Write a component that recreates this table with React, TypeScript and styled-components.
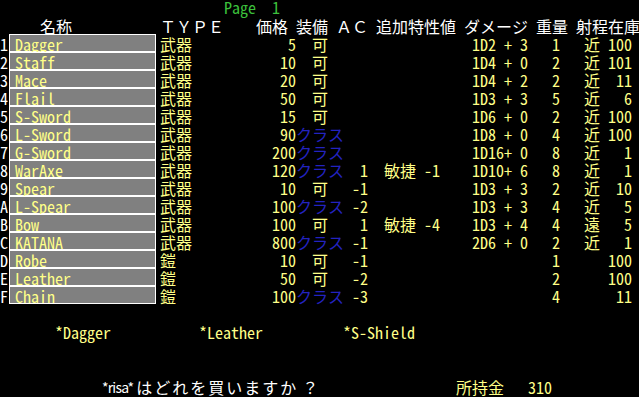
import React from 'react';
import styled, { createGlobalStyle } from 'styled-components';

const YELLOW = '#ffff88';
const BLUE = '#2323c0';

type Item = {
  key: string;
  name: string;
  type: string;
  price: number;
  equip: '可' | 'クラス';
  ac?: string;
  extra?: string;
  damage?: string;
  weight: number;
  range?: string;
  stock: number;
};

const items: Item[] = [
  { key: '1', name: 'Dagger', type: '武器', price: 5, equip: '可', damage: '1D2 + 3', weight: 1, range: '近', stock: 100 },
  { key: '2', name: 'Staff', type: '武器', price: 10, equip: '可', damage: '1D4 + 0', weight: 2, range: '近', stock: 101 },
  { key: '3', name: 'Mace', type: '武器', price: 20, equip: '可', damage: '1D4 + 2', weight: 2, range: '近', stock: 11 },
  { key: '4', name: 'Flail', type: '武器', price: 50, equip: '可', damage: '1D3 + 3', weight: 5, range: '近', stock: 6 },
  { key: '5', name: 'S-Sword', type: '武器', price: 15, equip: '可', damage: '1D6 + 0', weight: 2, range: '近', stock: 100 },
  { key: '6', name: 'L-Sword', type: '武器', price: 90, equip: 'クラス', damage: '1D8 + 0', weight: 4, range: '近', stock: 100 },
  { key: '7', name: 'G-Sword', type: '武器', price: 200, equip: 'クラス', damage: '1D16+ 0', weight: 8, range: '近', stock: 1 },
  { key: '8', name: 'WarAxe', type: '武器', price: 120, equip: 'クラス', ac: '1', extra: '敏捷 -1', damage: '1D10+ 6', weight: 8, range: '近', stock: 1 },
  { key: '9', name: 'Spear', type: '武器', price: 10, equip: '可', ac: '-1', damage: '1D3 + 3', weight: 2, range: '近', stock: 10 },
  { key: 'A', name: 'L-Spear', type: '武器', price: 100, equip: 'クラス', ac: '-2', damage: '1D3 + 3', weight: 4, range: '近', stock: 5 },
  { key: 'B', name: 'Bow', type: '武器', price: 100, equip: '可', ac: '1', extra: '敏捷 -4', damage: '1D3 + 4', weight: 4, range: '遠', stock: 5 },
  { key: 'C', name: 'KATANA', type: '武器', price: 800, equip: 'クラス', ac: '-1', damage: '2D6 + 0', weight: 2, range: '近', stock: 1 },
  { key: 'D', name: 'Robe', type: '鎧', price: 10, equip: '可', ac: '-1', weight: 1, stock: 100 },
  { key: 'E', name: 'Leather', type: '鎧', price: 50, equip: '可', ac: '-2', weight: 2, stock: 100 },
  { key: 'F', name: 'Chain', type: '鎧', price: 100, equip: 'クラス', ac: '-3', weight: 4, stock: 11 },
];

const equipped = ['*Dagger', '*Leather', '*S-Shield'];

const GlobalStyle = createGlobalStyle`
  html, body {
    margin: 0;
    padding: 0;
    background: #000;
  }
`;

export default function App() {
  return (
    <>
      <GlobalStyle />
      <Screen>
        <PageLine>Page  1</PageLine>

        <HeaderRow>
          <span />
          <span>名称</span>
          <span>ＴＹＰＥ</span>
          <span>価格</span>
          <span>装備</span>
          <span>ＡＣ</span>
          <span>追加特性値</span>
          <span>ダメージ</span>
          <span>重量</span>
          <span>射程在庫</span>
        </HeaderRow>

        <ItemList>
          {items.map((it) => (
            <Row key={it.key}>
              <Index>{it.key}</Index>
              <NameBox>{it.name}</NameBox>
              <Type>{it.type}</Type>
              <Num>{it.price}</Num>
              <Equip $class={it.equip === 'クラス'}>{it.equip}</Equip>
              <Num>{it.ac}</Num>
              <Extra>{it.extra}</Extra>
              <span>{it.damage}</span>
              <Num>{it.weight}</Num>
              <Range>{it.range}</Range>
              <Num>{it.stock}</Num>
            </Row>
          ))}
        </ItemList>

        <EquippedLine>
          {equipped.map((e) => (
            <span key={e}>{e}</span>
          ))}
        </EquippedLine>

        <PromptLine>
          <Prompt>
            <Who>*risa*</Who>
            <Ask>はどれを買いますか</Ask>
            <Mark>？</Mark>
          </Prompt>
          <Gold>所持金</Gold>
          <Gold>310</Gold>
        </PromptLine>
      </Screen>
    </>
  );
}

const Screen = styled.div`
  display: flex;
  flex-direction: column;
  width: 639px;
  height: 397px;
  background: #000;
  font-family: 'Noto Sans Mono CJK JP', 'Noto Sans CJK JP', 'DejaVu Sans Mono', monospace;
  font-size: 16px;
  line-height: 18px;
  white-space: pre;
`;

const PageLine = styled.div`
  height: 18px;
  padding-left: 224px;
  line-height: 15px;
  color: #3cc03c;
`;

const HeaderRow = styled.div`
  display: grid;
  grid-template-columns: 40px 120px 96px 40px 40px 40px 88px 72px 40px 1fr;
  height: 18px;
  line-height: 16px;
  color: #fff;
`;

const ItemList = styled.div`
  display: flex;
  flex-direction: column;
  margin-top: -2px;
`;

const Row = styled.div`
  display: grid;
  grid-template-columns: 9px 147px 84px 56px 48px 24px 104px 64px 24px 40px 32px;
  height: 18px;
  line-height: 20px;
  color: ${YELLOW};
`;

const Index = styled.span`
  color: #fff;
`;

const NameBox = styled.span`
  box-sizing: border-box;
  height: 18px;
  padding-left: 5px;
  line-height: 18px;
  background: #808080;
  border: 1px solid #fff;
`;

const Type = styled.span`
  padding-left: 4px;
`;

const Num = styled.span`
  text-align: right;
`;

const Equip = styled.span<{ $class: boolean }>`
  text-align: center;
  color: ${(p) => (p.$class ? BLUE : YELLOW)};
`;

const Extra = styled.span`
  padding-left: 16px;
`;

const Range = styled.span`
  padding-left: 24px;
`;

const EquippedLine = styled.div`
  display: grid;
  grid-template-columns: repeat(3, 144px);
  height: 18px;
  margin-top: 20px;
  padding-left: 55px;
  line-height: 16px;
  color: ${YELLOW};
`;

const PromptLine = styled.div`
  display: grid;
  grid-template-columns: 354px 72px 1fr;
  height: 18px;
  margin-top: 36px;
  padding-left: 102px;
`;

const Prompt = styled.span`
  display: flex;
  color: #fff;
`;

const Who = styled.span`
  font-family: 'Noto Sans CJK JP', sans-serif;
  font-size: 14px;
  letter-spacing: -0.8px;
`;

const Ask = styled.span`
  margin-left: 3px;
  letter-spacing: 2px;
`;

const Mark = styled.span`
  margin-left: 4px;
`;

const Gold = styled.span`
  color: ${YELLOW};
`;
